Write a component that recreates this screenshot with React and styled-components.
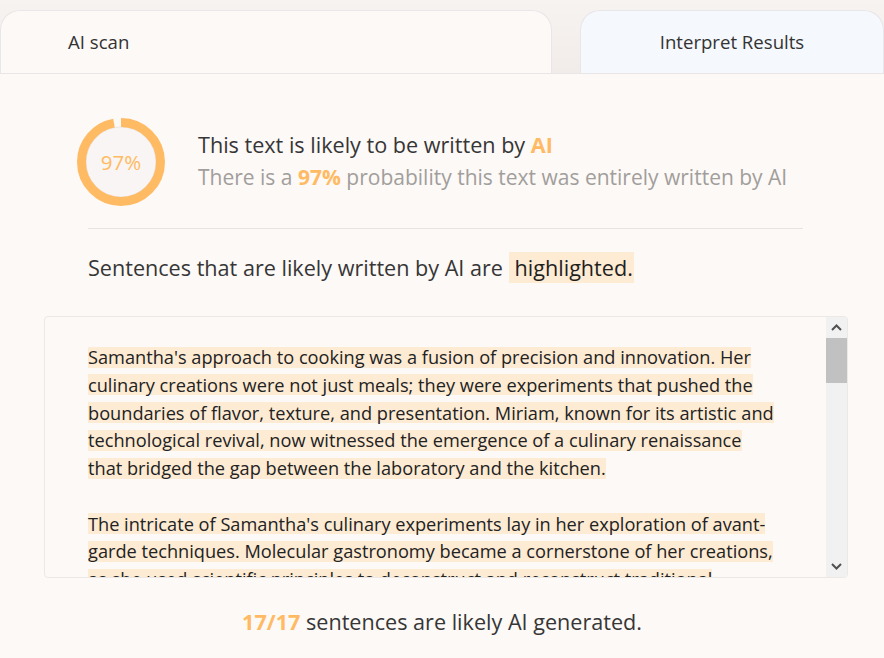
import styled, { createGlobalStyle } from "styled-components";

const GlobalStyle = createGlobalStyle`
  html, body {
    margin: 0;
    padding: 0;
    background: #fdf9f6;
    font-family: "Open Sans", "Noto Sans", sans-serif;
    color: #3a3a3a;
  }
`;

const Page = styled.div`
  width: 884px;
  height: 658px;
  overflow: hidden;
  background: #fdf9f6;
`;

const Tabs = styled.div`
  display: flex;
  gap: 28px;
  padding-top: 10px;
  height: 63px;
  background: linear-gradient(180deg, #f7f3f0 0%, #f1ece9 100%);
  border-bottom: 1px solid #e9e6e7;
`;

const Tab = styled.div`
  flex: ${(p) => (p.$wide ? "0 0 552px" : "1")};
  display: flex;
  align-items: center;
  justify-content: ${(p) => (p.$wide ? "flex-start" : "center")};
  padding-left: ${(p) => (p.$wide ? "67px" : "0")};
  padding-bottom: 2px;
  box-sizing: border-box;
  background: ${(p) => (p.$blue ? "#f5f8fc" : "#fdf9f6")};
  border: 1px solid #e9e6e9;
  border-bottom: none;
  border-radius: 20px 20px 0 0;
  font-size: 18.6px;
  color: #333;
`;

const Summary = styled.div`
  display: flex;
  align-items: center;
  gap: 33px;
  padding: 44px 0 0 77px;
`;

const Donut = styled.div`
  position: relative;
  width: 88px;
  height: 88px;
  flex: none;
`;

const DonutLabel = styled.span`
  position: absolute;
  inset: 0;
  display: flex;
  align-items: center;
  justify-content: center;
  font-size: 20.5px;
  color: #ffbb63;
`;

const Texts = styled.div`
  display: flex;
  flex-direction: column;
  gap: 4px;
  margin-top: -3px;
`;

const Headline = styled.div`
  font-size: 21.6px;
  color: #363636;
`;

const Sub = styled.div`
  font-size: 21px;
  color: #a19e9c;
`;

const Accent = styled.b`
  color: #ffba63;
  font-weight: 700;
`;

const Divider = styled.hr`
  margin: 22px 81px 0 88px;
  border: none;
  border-top: 1px solid #e6e3e1;
`;

const Legend = styled.div`
  padding: 24px 0 0 88px;
  font-size: 21.6px;
  color: #363636;
`;

const Mark = styled.span`
  background: #fdebd3;
  color: #1f1f1f;
  padding: 1px 1px 1px 6px;
`;

const TextBox = styled.div`
  display: flex;
  margin: 34px 36px 0 44px;
  height: 262px;
  box-sizing: border-box;
  border: 1px solid #ebe8e6;
  border-radius: 4px;
  overflow: hidden;
`;

const Content = styled.div`
  flex: 1;
  overflow: hidden;
  padding: 27px 50px 0 43px;
  font-size: 18.2px;
  line-height: 27.75px;
  color: #222;
`;

const Para = styled.p`
  margin: 0 0 27.75px;
`;

const Hl = styled.span`
  background-image: linear-gradient(#fdebd4, #fdebd4);
  background-size: 100% 21px;
  background-position: 0 55%;
  background-repeat: no-repeat;
  -webkit-box-decoration-break: clone;
  box-decoration-break: clone;
`;

const ScrollBar = styled.div`
  flex: 0 0 21px;
  display: flex;
  flex-direction: column;
  background: #f1f1f1;
`;

const ScrollButton = styled.div`
  height: 21px;
  display: flex;
  align-items: center;
  justify-content: center;
  color: #505050;
`;

const Thumb = styled.div`
  height: 45px;
  background: #c1c1c1;
`;

const Spacer = styled.div`
  flex: 1;
`;

const Footer = styled.div`
  text-align: center;
  padding-top: 29px;
  font-size: 21.6px;
  color: #363636;
`;

const paragraphs = [
  "Samantha's approach to cooking was a fusion of precision and innovation. Her culinary creations were not just meals; they were experiments that pushed the boundaries of flavor, texture, and presentation. Miriam, known for its artistic and technological revival, now witnessed the emergence of a culinary renaissance that bridged the gap between the laboratory and the kitchen.",
  "The intricate of Samantha's culinary experiments lay in her exploration of avant-garde techniques. Molecular gastronomy became a cornerstone of her creations, as she used scientific principles to deconstruct and reconstruct traditional dishes.",
];

function Chevron({ up }) {
  return (
    <svg width="11" height="7" viewBox="0 0 11 7">
      <path
        d={up ? "M1 6 L5.5 1.5 L10 6" : "M1 1 L5.5 5.5 L10 1"}
        fill="none"
        stroke="currentColor"
        strokeWidth="2"
      />
    </svg>
  );
}

function ScoreRing({ value }) {
  const r = 39.5;
  const c = 2 * Math.PI * r;
  return (
    <Donut>
      <svg width="88" height="88" viewBox="0 0 88 88">
        <circle cx="44" cy="44" r="35" fill="#f8f5f4" stroke="#ebe8ea" strokeWidth="1" />
        <circle
          cx="44"
          cy="44"
          r={r}
          fill="none"
          stroke="#ffbb63"
          strokeWidth="9"
          strokeDasharray={`${(c * value) / 100} ${c}`}
          transform="rotate(-90 44 44)"
        />
      </svg>
      <DonutLabel>{value}%</DonutLabel>
    </Donut>
  );
}

export default function App() {
  return (
    <Page>
      <GlobalStyle />
      <Tabs>
        <Tab $wide>AI scan</Tab>
        <Tab $blue>Interpret Results</Tab>
      </Tabs>
      <Summary>
        <ScoreRing value={97} />
        <Texts>
          <Headline>
            This text is likely to be written by <Accent>AI</Accent>
          </Headline>
          <Sub>
            There is a <Accent>97%</Accent> probability this text was entirely
            written by AI
          </Sub>
        </Texts>
      </Summary>
      <Divider />
      <Legend>
        Sentences that are likely written by AI are <Mark>highlighted.</Mark>
      </Legend>
      <TextBox>
        <Content>
          {paragraphs.map((p, i) => (
            <Para key={i}>
              <Hl>{p}</Hl>
            </Para>
          ))}
        </Content>
        <ScrollBar>
          <ScrollButton>
            <Chevron up />
          </ScrollButton>
          <Thumb />
          <Spacer />
          <ScrollButton>
            <Chevron />
          </ScrollButton>
        </ScrollBar>
      </TextBox>
      <Footer>
        <Accent>17/17</Accent> sentences are likely AI generated.
      </Footer>
    </Page>
  );
}
